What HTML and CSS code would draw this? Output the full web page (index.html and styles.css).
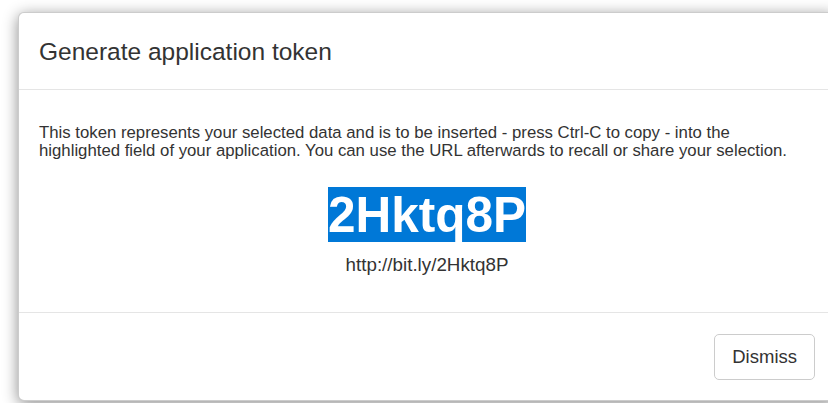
FILE: index.html
```html
<!DOCTYPE html>
<html lang="en">
<head>
<meta charset="utf-8">
<title>Generate application token</title>
<link rel="stylesheet" href="styles.css">
</head>
<body>
<div class="stage">
  <div class="modal" role="dialog" aria-labelledby="token-title">
    <div class="modal-header">
      <h4 class="modal-title" id="token-title">Generate application token</h4>
    </div>
    <div class="modal-body">
      <p class="intro">This token represents your selected data and is to be inserted - press Ctrl-C to copy - into the highlighted field of your application. You can use the URL afterwards to recall or share your selection.</p>
      <div class="token"><span class="token-value">2Hktq8P</span></div>
      <div class="short-url">http://bit.ly/2Hktq8P</div>
    </div>
    <div class="modal-footer">
      <button type="button" class="btn">Dismiss</button>
    </div>
  </div>
</div>
</body>
</html>
```

FILE: styles.css
```css
html, body {
  margin: 0;
  padding: 0;
  background: #fff;
  overflow: hidden;
}

body {
  width: 828px;
  height: 403px;
  font-family: "Liberation Sans", Arial, sans-serif;
  color: #333;
}

.stage {
  display: flex;
  padding: 12px 0 0 18px;
}

.modal {
  flex: 0 0 818px;
  box-sizing: border-box;
  width: 818px;
  background: #fff;
  border: 1px solid rgba(0, 0, 0, 0.2);
  border-radius: 6px;
  box-shadow: 0 3px 15px rgba(0, 0, 0, 0.45);
}

.modal-header {
  padding: 25px 20px 24px;
  border-bottom: 1px solid #e5e5e5;
}

.modal-title {
  margin: 0;
  font-size: 24.5px;
  font-weight: normal;
  line-height: 27px;
  color: #333;
}

.modal-body {
  padding: 34px 20px 35px;
}

.intro {
  margin: 0;
  font-size: 16.75px;
  line-height: 18px;
}

.token {
  margin-top: 27px;
  text-align: center;
  line-height: 56px;
  height: 56px;
}

.token-value {
  font-size: 49.5px;
  font-weight: bold;
  color: #fff;
  background: #0078d7;
}

.short-url {
  margin-top: 11px;
  text-align: center;
  font-size: 18.8px;
  line-height: 22.6px;
}

.modal-footer {
  display: flex;
  justify-content: flex-end;
  padding: 21px 20px 20px;
  border-top: 1px solid #e5e5e5;
}

.btn {
  box-sizing: border-box;
  height: 46px;
  padding: 0 17px;
  font-family: "Liberation Sans", Arial, sans-serif;
  font-size: 18.5px;
  color: #333;
  background: #fff;
  border: 1px solid #ccc;
  border-radius: 5px;
}
```
